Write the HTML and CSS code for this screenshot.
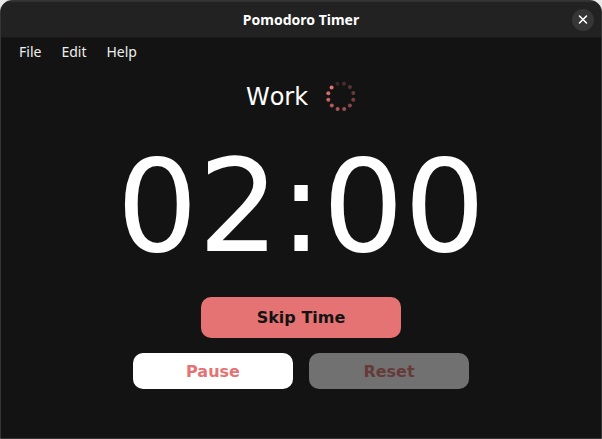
FILE: index.html
```html
<!DOCTYPE html>
<html lang="en">
<head>
<meta charset="utf-8">
<title>Pomodoro Timer</title>
<link rel="stylesheet" href="styles.css">
</head>
<body>
<div class="window">
  <header class="titlebar">
    <h1 class="title">Pomodoro Timer</h1>
    <button class="close" type="button" aria-label="Close">
      <svg width="22" height="22" viewBox="0 0 22 22"><path d="M7.5 7l7 7M14.5 7l-7 7" fill="none" stroke="#fff" stroke-width="1.6" stroke-linecap="round"/></svg>
    </button>
  </header>
  <nav class="menubar">
    <button type="button">File</button>
    <button type="button">Edit</button>
    <button type="button">Help</button>
  </nav>
  <main class="content">
    <div class="status">
      <span>Work</span>
      <svg width="32" height="32" viewBox="0 0 32 32" fill="#e57373">
        <circle cx="13.4" cy="2.8" r="2" opacity=".2"/>
        <circle cx="20" cy="2.8" r="2" opacity=".27"/>
        <circle cx="25.9" cy="6.1" r="2" opacity=".34"/>
        <circle cx="29.3" cy="12" r="2" opacity=".41"/>
        <circle cx="29.3" cy="18.7" r="2" opacity=".48"/>
        <circle cx="25.9" cy="24.5" r="2" opacity=".55"/>
        <circle cx="20.2" cy="27.9" r="2" opacity=".63"/>
        <circle cx="13.6" cy="27.9" r="2" opacity=".7"/>
        <circle cx="7.8" cy="24.5" r="2" opacity=".77"/>
        <circle cx="4.3" cy="18.8" r="2" opacity=".85"/>
        <circle cx="4.3" cy="12.2" r="2" opacity=".92"/>
        <circle cx="7.6" cy="6.4" r="2"/>
      </svg>
    </div>
    <time class="clock">02:00</time>
    <button class="btn skip" type="button">Skip Time</button>
    <div class="actions">
      <button class="btn pause" type="button">Pause</button>
      <button class="btn reset" type="button" disabled>Reset</button>
    </div>
  </main>
</div>
</body>
</html>
```
FILE: styles.css
```css
* { box-sizing: border-box; }
body {
  margin: 0;
  background: #e9e9e9;
  color: #fff;
  font-family: "DejaVu Sans", sans-serif;
}
button {
  margin: 0;
  padding: 0;
  border: 0;
  font-family: inherit;
}
.window {
  display: flex;
  flex-direction: column;
  min-height: 100vh;
  background: #131313;
  border: 1px solid #353535;
  border-radius: 12px 12px 0 0;
  overflow: hidden;
}
.titlebar {
  display: grid;
  grid-template-columns: 1fr auto 1fr;
  align-items: center;
  height: 37px;
  padding: 0 7px;
  background: #222;
  border-top: 1px solid #303030;
  border-bottom: 1px solid #1a1a1a;
}
.title {
  grid-column: 2;
  margin: 0;
  font: bold 14px/20px "Noto Sans", sans-serif;
}
.close {
  justify-self: end;
  width: 22px;
  height: 22px;
  border-radius: 50%;
  background: #363636;
}
.close svg { display: block; }
.menubar {
  display: flex;
  gap: 20px;
  padding: 4px 18px;
}
.menubar button {
  background: none;
  color: #eee;
  font: 14px/20px "Noto Sans", sans-serif;
}
.content {
  display: flex;
  flex-direction: column;
  align-items: center;
  padding-top: 15px;
}
.status {
  display: flex;
  align-items: center;
  gap: 16px;
  font-size: 24px;
  line-height: 32px;
  font-kerning: none;
}
.clock {
  margin: 19px 0 16px;
  font-size: 128px;
  line-height: 149px;
}
.btn {
  border-radius: 10px;
  font-size: 16px;
  font-weight: bold;
}
.skip {
  width: 200px;
  height: 41px;
  background: #e57373;
  color: #131313;
}
.actions {
  display: flex;
  gap: 16px;
  margin-top: 15px;
}
.actions .btn {
  width: 160px;
  height: 36px;
}
.pause {
  background: #fff;
  color: #e57373;
}
.reset {
  background: #717171;
  color: #673a3a;
}
```
